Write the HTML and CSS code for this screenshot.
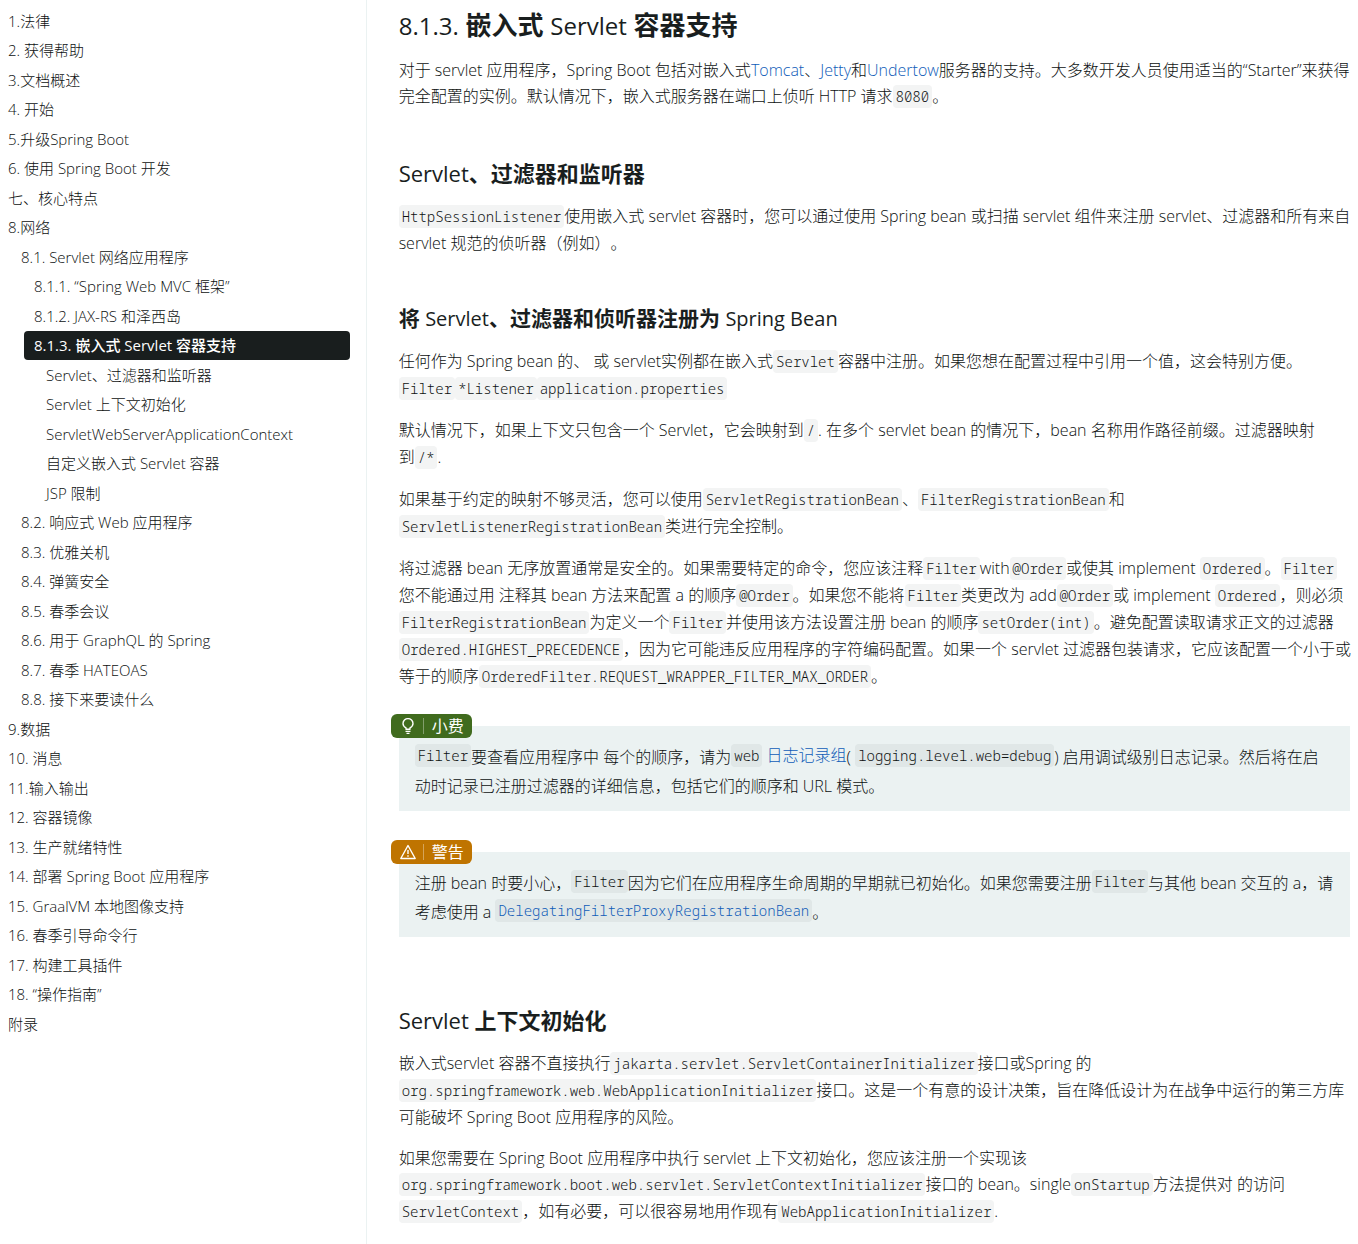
FILE: index.html
```html
<!DOCTYPE html>
<html lang="zh-CN">
<head>
<meta charset="utf-8">
<title>8.1.3. 嵌入式 Servlet 容器支持</title>
<link rel="stylesheet" href="styles.css">
</head>
<body>
<div class="page">
<nav class="toc" aria-label="目录">
<ul class="toc-list">
<li><a href="#legal">1.法律</a></li>
<li><a href="#help">2. 获得帮助</a></li>
<li><a href="#overview">3.文档概述</a></li>
<li><a href="#start">4. 开始</a></li>
<li><a href="#upgrade">5.升级Spring Boot</a></li>
<li><a href="#using">6. 使用 Spring Boot 开发</a></li>
<li><a href="#features">七、核心特点</a></li>
<li><a href="#web">8.网络</a></li>
<li class="level-2"><a href="#web-servlet">8.1. Servlet 网络应用程序</a></li>
<li class="level-3"><a href="#mvc">8.1.1. “Spring Web MVC 框架”</a></li>
<li class="level-3"><a href="#jersey">8.1.2. JAX-RS 和泽西岛</a></li>
<li class="level-3 active"><a href="#embedded" aria-current="true">8.1.3. 嵌入式 Servlet 容器支持</a></li>
<li class="level-4"><a href="#filters">Servlet、过滤器和监听器</a></li>
<li class="level-4"><a href="#context">Servlet 上下文初始化</a></li>
<li class="level-4"><a href="#application-context">ServletWebServerApplicationContext</a></li>
<li class="level-4"><a href="#customizing">自定义嵌入式 Servlet 容器</a></li>
<li class="level-4"><a href="#jsp">JSP 限制</a></li>
<li class="level-2"><a href="#reactive">8.2. 响应式 Web 应用程序</a></li>
<li class="level-2"><a href="#shutdown">8.3. 优雅关机</a></li>
<li class="level-2"><a href="#security">8.4. 弹簧安全</a></li>
<li class="level-2"><a href="#session">8.5. 春季会议</a></li>
<li class="level-2"><a href="#graphql">8.6. 用于 GraphQL 的 Spring</a></li>
<li class="level-2"><a href="#hateoas">8.7. 春季 HATEOAS</a></li>
<li class="level-2"><a href="#whats-next">8.8. 接下来要读什么</a></li>
<li><a href="#data">9.数据</a></li>
<li><a href="#messaging">10. 消息</a></li>
<li><a href="#io">11.输入输出</a></li>
<li><a href="#images">12. 容器镜像</a></li>
<li><a href="#actuator">13. 生产就绪特性</a></li>
<li><a href="#deployment">14. 部署 Spring Boot 应用程序</a></li>
<li><a href="#native">15. GraalVM 本地图像支持</a></li>
<li><a href="#cli">16. 春季引导命令行</a></li>
<li><a href="#build-tools">17. 构建工具插件</a></li>
<li><a href="#howto">18. “操作指南”</a></li>
<li><a href="#appendix">附录</a></li>
</ul>
</nav>
<main class="content">
<section id="embedded">
<h1><span class="latin">8.1.3.</span> 嵌入式 <span class="latin">Servlet</span> 容器支持</h1>
<p>对于 servlet 应用程序，Spring Boot 包括对嵌入式<a href="#tomcat">Tomcat</a>、<a href="#jetty">Jetty</a>和<a href="#undertow">Undertow</a>服务器的支持。大多数开发人员使用适当的“Starter”来获得<br>完全配置的实例。默认情况下，嵌入式服务器在端口上侦听 HTTP 请求<code>8080</code>。</p>
</section>
<section id="filters">
<h2><span class="latin">Servlet</span>、过滤器和监听器</h2>
<p><code>HttpSessionListener</code>使用嵌入式 servlet 容器时，您可以通过使用 Spring bean 或扫描 servlet 组件来注册 servlet、过滤器和所有来自<br>servlet 规范的侦听器（例如）。</p>
</section>
<section>
<h3>将 <span class="latin">Servlet</span>、过滤器和侦听器注册为 <span class="latin">Spring Bean</span></h3>
<p>任何作为 Spring bean 的、 或 servlet实例都在嵌入式<code>Servlet</code>容器中注册。如果您想在配置过程中引用一个值，这会特别方便。<br><code>Filter</code><code>*Listener</code><code>application.properties</code></p>
<p>默认情况下，如果上下文只包含一个 Servlet，它会映射到<code>/</code>. 在多个 servlet bean 的情况下，bean 名称用作路径前缀。过滤器映射<br>到<code>/*</code>.</p>
<p>如果基于约定的映射不够灵活，您可以使用<code>ServletRegistrationBean</code>、<code>FilterRegistrationBean</code>和<br><code>ServletListenerRegistrationBean</code>类进行完全控制。</p>
<p>将过滤器 bean 无序放置通常是安全的。如果需要特定的命令，您应该注释<code>Filter</code>with<code>@Order</code>或使其 implement <code>Ordered</code>。<code>Filter</code><br>您不能通过用 注释其 bean 方法来配置 a 的顺序<code>@Order</code>。如果您不能将<code>Filter</code>类更改为 add<code>@Order</code>或 implement <code>Ordered</code>，则必须<br><code>FilterRegistrationBean</code>为定义一个<code>Filter</code>并使用该方法设置注册 bean 的顺序<code>setOrder(int)</code>。避免配置读取请求正文的过滤器<br><code>Ordered.HIGHEST_PRECEDENCE</code>，因为它可能违反应用程序的字符编码配置。如果一个 servlet 过滤器包装请求，它应该配置一个小于或<br>等于的顺序<code>OrderedFilter.REQUEST_WRAPPER_FILTER_MAX_ORDER</code>。</p>
<aside class="note">
<div class="badge tip">
<svg viewBox="0 0 16 16" width="16" height="16" aria-hidden="true"><path d="M6 11.200V9.800C4.300 9 3 7.500 3 5.600a5 5 0 0 1 10 0C13 7.500 11.700 9 10 9.800v1.400zM5.500 13.400h5M6.500 15.400h3"/></svg>
<span>小费</span>
</div>
<p><code>Filter</code>要查看应用程序中 每个的顺序，请为<code>web</code> <a class="raised" href="#log-groups">日志记录组</a>( <code>logging.level.web=debug</code>) 启用调试级别日志记录。然后将在启<br>动时记录已注册过滤器的详细信息，包括它们的顺序和 URL 模式。</p>
</aside>
<aside class="note">
<div class="badge warning">
<svg viewBox="0 0 16 16" width="16" height="16" aria-hidden="true"><path d="M8 1.500 15.200 14.500H.8zM8 6v4M8 11.300v1.500"/></svg>
<span>警告</span>
</div>
<p>注册 bean 时要小心，<code>Filter</code>因为它们在应用程序生命周期的早期就已初始化。如果您需要注册<code>Filter</code>与其他 bean 交互的 a，请<br>考虑使用 a <a href="#delegating"><code>DelegatingFilterProxyRegistrationBean</code></a>。</p>
</aside>
</section>
<section id="context">
<h2><span class="latin">Servlet</span> 上下文初始化</h2>
<p>嵌入式servlet 容器不直接执行<code>jakarta.servlet.ServletContainerInitializer</code>接口或Spring 的<br><code>org.springframework.web.WebApplicationInitializer</code>接口。这是一个有意的设计决策，旨在降低设计为在战争中运行的第三方库<br>可能破坏 Spring Boot 应用程序的风险。</p>
<p>如果您需要在 Spring Boot 应用程序中执行 servlet 上下文初始化，您应该注册一个实现该<br><code>org.springframework.boot.web.servlet.ServletContextInitializer</code>接口的 bean。single<code>onStartup</code>方法提供对 的访问<br><code>ServletContext</code>，如有必要，可以很容易地用作现有<code>WebApplicationInitializer</code>.</p>
</section>
</main>
</div>
</body>
</html>
```
FILE: styles.css
```css
* { box-sizing: border-box; }

body {
  margin: 0;
  background: #fff;
  color: #0c1010;
  font: 300 16px/26px "Open Sans", "Noto Sans CJK SC", sans-serif;
  text-spacing-trim: space-all;
}

a { color: #0f5cb8; text-decoration: none; }

.page { display: flex; min-height: 100vh; }

/* Table of contents */
.toc {
  flex: 0 0 27%;
  padding: 7px 16px 16px 8px;
  border-right: 1px solid #ebf2f2;
}
.toc-list { margin: 0; padding: 0; list-style: none; }
.toc-list li:nth-child(even) { margin-bottom: 1px; }
.toc-list a {
  display: block;
  color: inherit;
  font-size: 15px;
  line-height: 29px;
  white-space: nowrap;
}
.level-2 { padding-left: 13px; }
.level-3 { padding-left: 26px; }
.level-4 { padding-left: 38px; }
.level-3.active { padding-left: 16px; }
.toc-list .active a {
  padding-left: 10px;
  border-radius: 4px;
  background: #191e1e;
  color: #fff;
  font-weight: 500;
}

/* Article */
.content { flex: 1; min-width: 0; padding: 9px 0 16px 32px; }

h1, h2, h3 { margin: 0; color: #191e1e; font-weight: 700; }
h1 { font-size: 26px; line-height: 32px; }
h2 { font-size: 22px; line-height: 30px; }
h3 { font-size: 21px; line-height: 28px; }
.latin { font-weight: 400; }
h1 .latin { font-size: 24px; }
h3 .latin { font-size: 20px; }

p { margin: 15px 0 0; }
section + section { padding-top: 48px; }

code {
  padding: 2px 3px;
  border-radius: 4px;
  background: rgba(25, 30, 30, .05);
  font: 300 14px/26px "Noto Sans Mono", "DejaVu Sans Mono", monospace;
}

/* Admonitions */
.note {
  position: relative;
  margin: 36px 8px 20px 0;
  padding: 17px 16px 10px;
  background: #ebf2f2;
}
.note + .note { margin-top: 41px; }
.note p { margin: 0; line-height: 29px; }
.note code, .note .raised { vertical-align: 2px; line-height: 20px; }
.badge {
  position: absolute;
  top: -12px;
  left: -8px;
  display: flex;
  align-items: center;
  height: 24px;
  padding: 0 8px 0 9px;
  border-radius: 6px;
  color: #fff;
  font-weight: 400;
}
.badge svg { fill: none; stroke: currentColor; stroke-width: 1.4; stroke-linejoin: round; }
.badge span {
  margin-left: 7px;
  padding-left: 8px;
  border-left: 1px solid rgba(255, 255, 255, .35);
  line-height: 16px;
}
.tip { background: #406b1e; }
.warning { background: #bf7400; }
```
